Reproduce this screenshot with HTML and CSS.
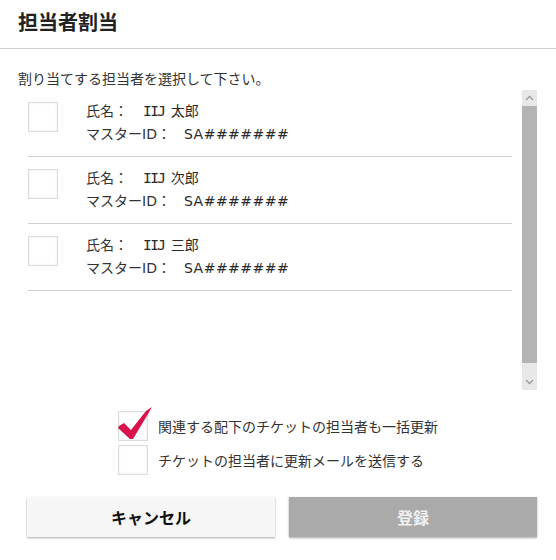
FILE: index.html
```html
<!DOCTYPE html>
<html lang="ja">
<head>
<meta charset="utf-8">
<link rel="stylesheet" href="styles.css">
</head>
<body>
<div class="dialog">
  <header class="header"><h1 class="title">担当者割当</h1></header>
  <p class="lead">割り当てする担当者を選択して下さい。</p>
  <div class="listwrap">
    <ul class="list">
      <li class="row">
        <span class="box"></span>
        <div class="info">
          <div>氏名：<span class="val v1"><span class="co">IIJ</span> 太郎</span></div>
          <div>マスターID：<span class="val v2">SA#######</span></div>
        </div>
      </li>
      <li class="row">
        <span class="box"></span>
        <div class="info">
          <div>氏名：<span class="val v1"><span class="co">IIJ</span> 次郎</span></div>
          <div>マスターID：<span class="val v2">SA#######</span></div>
        </div>
      </li>
      <li class="row">
        <span class="box"></span>
        <div class="info">
          <div>氏名：<span class="val v1"><span class="co">IIJ</span> 三郎</span></div>
          <div>マスターID：<span class="val v2">SA#######</span></div>
        </div>
      </li>
    </ul>
    <div class="scrollbar">
      <div class="sb-btn"><svg width="15" height="16" viewBox="0 0 15 16"><path d="M4 10 L7.5 6.5 L11 10" fill="none" stroke="#9a9a9a" stroke-width="1.3"/></svg></div>
      <div class="sb-thumb"></div>
      <div class="sb-track"></div>
      <div class="sb-btn"><svg width="15" height="16" viewBox="0 0 15 16"><path d="M4 6 L7.5 9.5 L11 6" fill="none" stroke="#9a9a9a" stroke-width="1.3"/></svg></div>
    </div>
  </div>
  <div class="options">
    <label class="opt">
      <span class="box small checked">
        <svg class="check" width="40" height="40" viewBox="0 0 40 40"><polygon points="3,21 8,18 15,25 30,6 36,2 32,9 17,34 14,34 2,23" fill="#d9124b"/></svg>
      </span>
      <span>関連する配下のチケットの担当者も一括更新</span>
    </label>
    <label class="opt">
      <span class="box small"></span>
      <span>チケットの担当者に更新メールを送信する</span>
    </label>
  </div>
  <div class="buttons">
    <button class="btn cancel">キャンセル</button>
    <button class="btn submit">登録</button>
  </div>
</div>
</body>
</html>
```

FILE: styles.css
```css
* { box-sizing: border-box; }
html, body { margin: 0; padding: 0; background: #fff; }
body {
  font-family: "Noto Sans CJK JP", "Noto Sans", sans-serif;
  color: #333;
  width: 556px;
  height: 560px;
  overflow: hidden;
}
.header {
  height: 49px;
  border-bottom: 1px solid #cfcfcf;
  padding: 0 18px;
  display: flex;
  align-items: center;
}
.title {
  margin: 0;
  font-size: 20px;
  font-weight: bold;
  color: #222;
  line-height: 1;
  padding-bottom: 5px;
}
.lead {
  margin: 0;
  padding: 19px 18px 0;
  font-size: 14px;
  line-height: 20px;
  height: 41px;
  color: #333;
}
.listwrap {
  display: flex;
  height: 300px;
  margin: 0 19px 0 18px;
}
.list {
  list-style: none;
  margin: 0;
  padding: 0 10px;
  flex: 1;
}
.row {
  display: flex;
  align-items: flex-start;
  padding: 10px 0;
  border-bottom: 1px solid #cfcfcf;
}
.box {
  position: relative;
  display: block;
  flex: none;
  width: 30px;
  height: 30px;
  border: 1px solid #dcdcdc;
  background: #fff;
  box-shadow: inset 0 0 3px rgba(0,0,0,0.08);
  margin-top: 2px;
}
.info {
  margin-left: 28px;
  font-family: "DejaVu Sans", "Noto Sans CJK JP", sans-serif;
  font-size: 14px;
  line-height: 23px;
  color: #333;
}
.val { color: #2a2a2a; }
.co {
  font-family: "DejaVu Sans Mono", monospace;
  font-size: 14.5px;
  letter-spacing: -1.6px;
  margin-right: 2px;
}
.v1 { margin-left: 15px; }
.v2 { margin-left: 13px; letter-spacing: 0.5px; }
.scrollbar {
  width: 15px;
  flex: none;
  display: flex;
  flex-direction: column;
  background: #e8e8e8;
}
.sb-btn { height: 16px; display: flex; }
.sb-thumb { height: 257px; background: #b4b4b4; }
.sb-track { flex: 1; }
.options {
  display: flex;
  flex-direction: column;
  gap: 4px;
  padding: 21px 0 0 118px;
}
.opt {
  display: flex;
  align-items: center;
  gap: 10px;
  font-size: 14px;
  line-height: 20px;
  color: #333;
}
.box.small { margin-top: 0; }
.check {
  position: absolute;
  left: -3px;
  top: -7px;
}
.buttons {
  display: flex;
  gap: 14px;
  padding: 22px 19px 0 27px;
}
.btn {
  flex: 1;
  height: 40px;
  border: none;
  font-family: "Noto Sans CJK JP", sans-serif;
  font-size: 16px;
  font-weight: bold;
  box-shadow: 0 1px 2px rgba(0,0,0,0.35);
  padding: 0;
}
.cancel { background: #f6f6f6; color: #111; }
.submit { background: #aaaaaa; color: #f0f0f0; }
```
